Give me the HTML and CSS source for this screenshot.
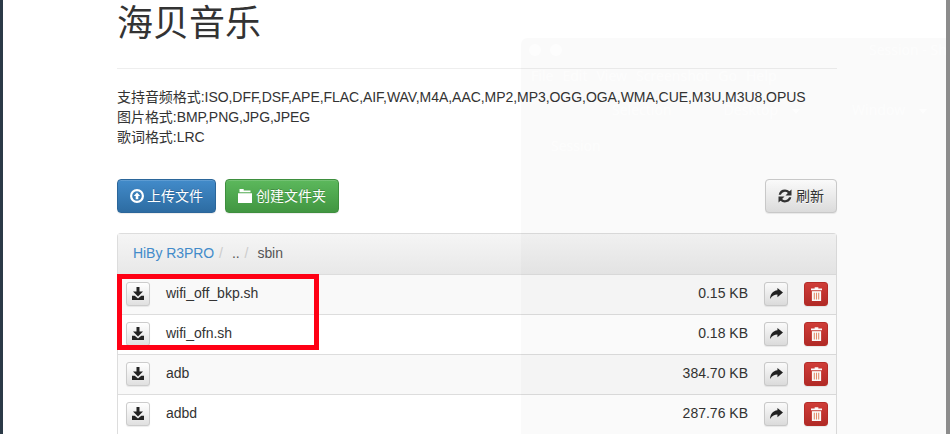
FILE: index.html
```html
<!DOCTYPE html>
<html lang="zh-CN">
<head>
    <meta charset="UTF-8">
    <meta name="viewport" content="width=device-width, initial-scale=1.0">
    <title>海贝音乐</title>
    <link rel="stylesheet" href="styles.css">
</head>
<body>
    <svg class="icon-defs" width="0" height="0">
        <symbol id="i-download" viewBox="0 0 12 13"><path d="M4.500 0h3v4.500H11L6 9.500 1 4.500h3.500zM0 8.800h2.700L6 11.500l3.300-2.700H12V13H0z"/></symbol>
        <symbol id="i-upload" viewBox="0 0 14 14"><path d="M7 0a7 7 0 1 1 0 14A7 7 0 0 1 7 0zm0 2.200a4.800 4.800 0 1 0 0 9.600 4.800 4.800 0 0 0 0-9.600zM7 3.500l3.200 3.400H8.300v3.400H5.700V6.900H3.800z" fill-rule="evenodd"/></symbol>
        <symbol id="i-folder" viewBox="0 0 14 14"><path d="M1.500 0h4.200v1.500h6.800V3.200h-11zM0 4.200h14V14H0z"/></symbol>
        <symbol id="i-refresh" viewBox="0 0 14 14"><path d="M7 0.500a6.500 6.500 0 0 1 4.500 1.800L13.500 0.500V6.500H7.500l2.400-2.400A4.200 4.200 0 0 0 2.900 5.800H0.700A6.500 6.500 0 0 1 7 0.500zM0.500 7.500h6L4.100 9.900a4.200 4.200 0 0 0 7-1.700h2.200a6.500 6.500 0 0 1-10.800 3.500L0.500 13.500z"/></symbol>
        <symbol id="i-share" viewBox="0 0 14 12"><path d="M8 0l6 5-6 5V7C5 7 2.500 8 0 12c.3-5 3-9 8-9.500z"/></symbol>
        <symbol id="i-trash" viewBox="0 0 12 15"><rect x="1" y="4.500" width="10" height="10.500" fill="#e8916f"/><path d="M4 0h4v1.500h4V3.500H0V1.500h4zM1 4.500h10V15H1zM3 6v7.500h1.200V6zm2.400 0v7.500h1.200V6zM7.800 6v7.500H9V6z" fill-rule="evenodd"/></symbol>
    </svg>

    <div class="page">
        <div class="container">
            <div class="page-header">
                <h1>海贝音乐</h1>
            </div>

            <div class="formats">
                <div>支持音频格式:ISO,DFF,DSF,APE,FLAC,AIF,WAV,M4A,AAC,MP2,MP3,OGG,OGA,WMA,CUE,M3U,M3U8,OPUS</div>
                <div>图片格式:BMP,PNG,JPG,JPEG</div>
                <div>歌词格式:LRC</div>
            </div>

            <div class="toolbar">
                <button class="btn btn-primary"><svg class="icon"><use href="#i-upload"/></svg>上传文件</button>
                <button class="btn btn-success"><svg class="icon"><use href="#i-folder"/></svg>创建文件夹</button>
                <button class="btn btn-default btn-refresh"><svg class="icon"><use href="#i-refresh"/></svg>刷新</button>
            </div>

            <div class="panel">
                <div class="panel-heading">
                    <a href="#">HiBy R3PRO</a><span class="sep">/</span><span class="crumb">..</span><span class="sep">/</span><span class="crumb">sbin</span>
                </div>
                <div class="row odd">
                    <button class="btn-xs"><svg class="icon"><use href="#i-download"/></svg></button>
                    <span class="name">wifi_off_bkp.sh</span>
                    <span class="size">0.15 KB</span>
                    <button class="btn-xs share"><svg class="icon"><use href="#i-share"/></svg></button>
                    <button class="btn-xs danger"><svg class="icon"><use href="#i-trash"/></svg></button>
                </div>
                <div class="row">
                    <button class="btn-xs"><svg class="icon"><use href="#i-download"/></svg></button>
                    <span class="name">wifi_ofn.sh</span>
                    <span class="size">0.18 KB</span>
                    <button class="btn-xs share"><svg class="icon"><use href="#i-share"/></svg></button>
                    <button class="btn-xs danger"><svg class="icon"><use href="#i-trash"/></svg></button>
                </div>
                <div class="row odd">
                    <button class="btn-xs"><svg class="icon"><use href="#i-download"/></svg></button>
                    <span class="name">adb</span>
                    <span class="size">384.70 KB</span>
                    <button class="btn-xs share"><svg class="icon"><use href="#i-share"/></svg></button>
                    <button class="btn-xs danger"><svg class="icon"><use href="#i-trash"/></svg></button>
                </div>
                <div class="row">
                    <button class="btn-xs"><svg class="icon"><use href="#i-download"/></svg></button>
                    <span class="name">adbd</span>
                    <span class="size">287.76 KB</span>
                    <button class="btn-xs share"><svg class="icon"><use href="#i-share"/></svg></button>
                    <button class="btn-xs danger"><svg class="icon"><use href="#i-trash"/></svg></button>
                </div>
            </div>
        </div>
    </div>

    <!-- red annotation box drawn on top of the screenshot -->
    <div class="mark"></div>

    <!-- faint window showing through from behind -->
    <div class="ghost">
        <div class="ghost-title"><i></i><i></i><span>Session - Sho</span></div>
        <div class="ghost-menu"><span>File</span><span>Edit</span><span>View</span><span>Screenshot</span><span>Go</span><span>Help</span></div>
        <div class="ghost-tools"><span>Selection</span><span class="caret">Desktop</span><span class="caret">Window</span></div>
        <div class="ghost-label">Session</div>
    </div>
</body>
</html>
```

FILE: styles.css
```css
* {
    box-sizing: border-box;
}

html, body {
    height: 100%;
    overflow: hidden;
}

body {
    margin: 0;
    font-family: "Liberation Sans", "Noto Sans CJK SC", sans-serif;
    font-size: 14px;
    line-height: 20px;
    color: #333;
    background-color: #fff;
    border-left: 3px solid #2b3a47;
    border-right: 4px solid #8c8c8c;
}

.icon-defs {
    display: block;
    height: 0;
}

.icon {
    width: 14px;
    height: 14px;
    fill: currentColor;
    display: inline-block;
    vertical-align: -2px;
}

.page {
    padding-left: 114px;
}

.container {
    width: 720px;
}

.page-header {
    height: 69px;
    padding-top: 4px;
    border-bottom: 1px solid #eee;
}

h1 {
    margin: 0;
    font-size: 36px;
    font-weight: 400;
    line-height: 40px;
}

.formats {
    margin-top: 18px;
    letter-spacing: -0.05px;
}

.toolbar {
    display: flex;
    gap: 9px;
    margin-top: 32px;
}

.btn {
    height: 34px;
    padding: 0 12px;
    font: inherit;
    border: 1px solid;
    border-radius: 4px;
    text-shadow: 0 -1px 0 rgba(0, 0, 0, 0.2);
    box-shadow: inset 0 1px 0 rgba(255, 255, 255, 0.15), 0 1px 1px rgba(0, 0, 0, 0.075);
}

.btn .icon {
    margin-right: 4px;
}

.btn-primary {
    color: #fff;
    background-image: linear-gradient(to bottom, #428bca 0, #2d6ca2 100%);
    border-color: #2b669a;
}

.btn-primary .icon {
    margin-right: 3px;
}

.btn-success {
    color: #fff;
    background-image: linear-gradient(to bottom, #5cb85c 0, #419641 100%);
    border-color: #3e8f3e;
}

.btn-default {
    color: #333;
    text-shadow: 0 1px 0 #fff;
    background-image: linear-gradient(to bottom, #fff 0, #e0e0e0 100%);
    border-color: #ccc;
}

.btn-refresh {
    margin-left: auto;
}

.panel {
    margin-top: 20px;
    border: 1px solid #ddd;
    border-bottom: 0;
    border-radius: 4px 4px 0 0;
}

.panel-heading {
    height: 41px;
    padding: 9px 15px;
    background-image: linear-gradient(to bottom, #f5f5f5 0, #e8e8e8 100%);
    border-bottom: 1px solid #ddd;
    color: #666;
    letter-spacing: -0.06px;
}

.panel-heading a {
    color: #428bca;
    text-decoration: none;
}

.sep {
    color: #ccc;
    padding: 0 5px;
}

.crumb {
    padding-left: 4px;
    color: #555;
}

.row {
    display: flex;
    align-items: center;
    height: 40px;
    padding: 0 8px 2px;
    border-bottom: 1px solid #ddd;
}

.odd {
    background-color: #f9f9f9;
}

.name {
    margin-left: 16px;
    padding-bottom: 2px;
    flex: 1;
}

.size {
    margin-right: 16px;
    padding-bottom: 2px;
}

.btn-xs {
    width: 24px;
    height: 24px;
    padding: 0;
    display: flex;
    align-items: center;
    justify-content: center;
    color: #222;
    border: 1px solid #ccc;
    border-radius: 3px;
    background-image: linear-gradient(to bottom, #fff 0, #e0e0e0 100%);
    box-shadow: 0 1px 1px rgba(0, 0, 0, 0.075);
}

.btn-xs .icon {
    width: 12px;
    height: 13px;
}

.share {
    margin-right: 16px;
}

.share .icon {
    width: 13px;
}

.danger {
    color: #fff;
    background-image: linear-gradient(to bottom, #d43f3a 0, #b52b27 100%);
    border-color: #b92c28;
}

.danger .icon {
    width: 11px;
    height: 14px;
}

.mark {
    position: absolute;
    left: 117px;
    top: 274px;
    width: 202px;
    height: 76px;
    border: 5px solid #ff0014;
}

.ghost {
    position: absolute;
    left: 521px;
    top: 38px;
    right: 4px;
    bottom: 0;
    overflow: hidden;
    white-space: nowrap;
    color: rgba(255, 255, 255, 0.6);
    background-color: rgba(0, 0, 0, 0.018);
    border-radius: 6px 0 0 0;
    font-family: "Noto Sans", sans-serif;
    pointer-events: none;
    opacity: 0.99;
}

.ghost-title {
    display: flex;
    align-items: center;
    height: 24px;
    padding-left: 8px;
    gap: 9px;
}

.ghost-title i {
    flex-shrink: 0;
    width: 12px;
    height: 12px;
    border-radius: 50%;
    background-color: rgba(255, 255, 255, 0.6);
}

.ghost-title span {
    flex-shrink: 0;
    margin-left: 298px;
}

.ghost-menu {
    display: flex;
    gap: 9px;
    padding: 4px 0 0 10px;
}

.ghost-tools {
    display: flex;
    padding: 14px 0 0 91px;
    gap: 52px;
}

.caret::after {
    content: "";
    display: inline-block;
    margin-left: 14px;
    vertical-align: middle;
    border-top: 5px solid rgba(255, 255, 255, 0.6);
    border-left: 4px solid transparent;
    border-right: 4px solid transparent;
}

.ghost-label {
    padding: 16px 0 0 30px;
}
```
